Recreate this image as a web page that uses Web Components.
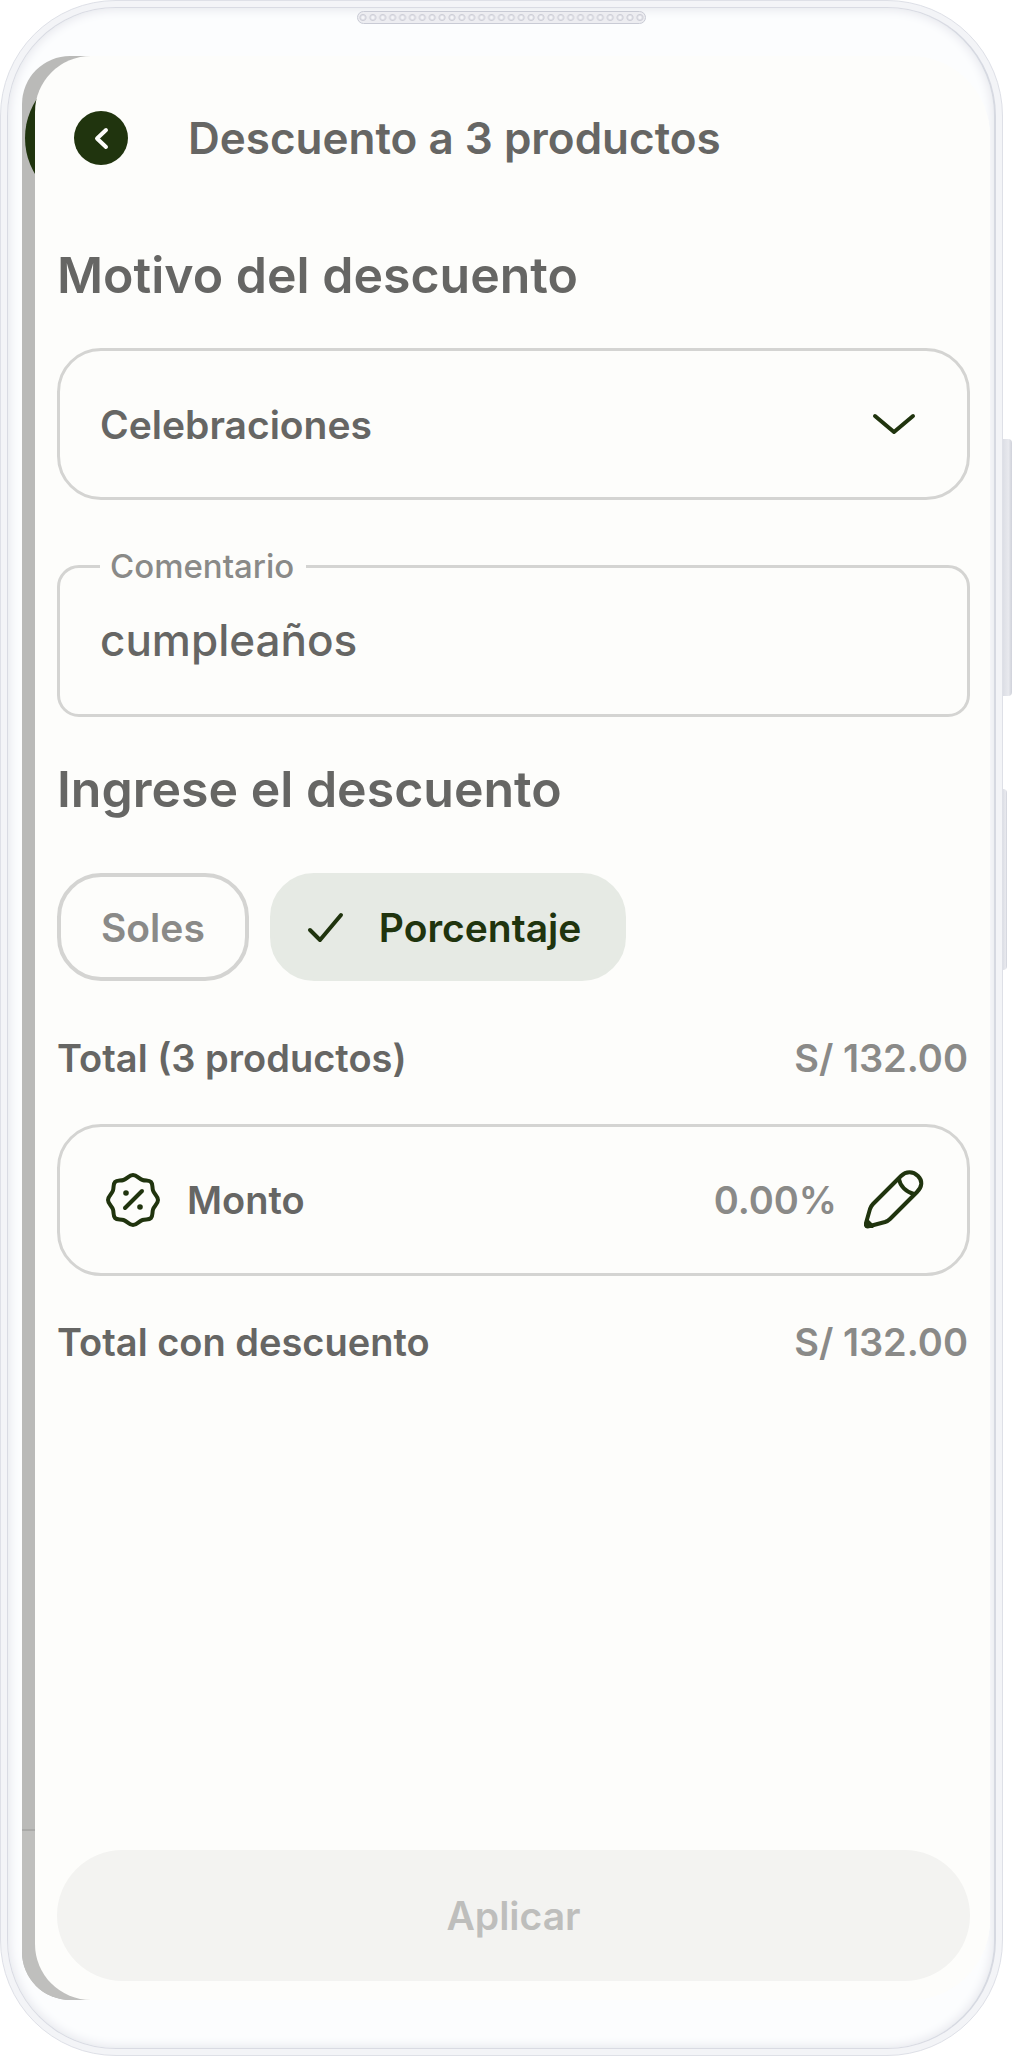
<!DOCTYPE html>
<html lang="es">
<head>
<meta charset="utf-8">
<meta name="viewport" content="width=device-width, initial-scale=1">
<title>Descuento a 3 productos</title>
<style>
  body {
    --green: #20340e;
    --text: #666664;
    --muted: #8a8a88;
    --line: #d4d4d2;
    --surface: #fdfdfb;

    margin: 0;
    background: #fff;
    color: var(--text);
    font-family: Inter, "Liberation Sans", sans-serif;
    font-weight: 600;
  }
</style>
</head>
<body>

<phone-frame>
  <app-header>Descuento a 3 productos</app-header>
  <section-title>Motivo del descuento</section-title>
  <select-field label="Motivo del descuento" value="Celebraciones"></select-field>
  <text-field label="Comentario" value="cumpleaños"></text-field>
  <section-title class="roomy">Ingrese el descuento</section-title>
  <chip-group>
    <choice-chip>Soles</choice-chip>
    <choice-chip selected>Porcentaje</choice-chip>
  </chip-group>
  <total-row>Total (3 productos)<span slot="amount">S/ 132.00</span></total-row>
  <amount-field>Monto<span slot="value">0.00%</span></amount-field>
  <total-row>Total con descuento<span slot="amount">S/ 132.00</span></total-row>
  <submit-button slot="footer">Aplicar</submit-button>
</phone-frame>

<script>
class BaseElement extends HTMLElement {
  constructor() {
    super();
    this.attachShadow({ mode: "open" });
  }

  connectedCallback() {
    this.shadowRoot.innerHTML = /* html */`
    <style>
      *, *::before, *::after { box-sizing: border-box; }
      button, input, select { font: inherit; color: inherit; margin: 0; }
      svg { display: block; fill: none; stroke-linecap: round; stroke-linejoin: round; }
      ${this.constructor.styles}
    </style>
    ${this.render()}`;
  }
}

class PhoneFrame extends BaseElement {
  static get styles() {
    return /* css */`
      :host {
        display: flex;
        position: relative;
        box-sizing: border-box;
        min-height: 100vh;
        padding-right: 9px;
      }

      .case {
        display: flex;
        flex: 1;
        min-width: 0;
        padding: 6px;
        background: #f3f4f7;
        border: 1px solid #dee0e7;
        border-radius: 116px;
      }

      .bezel {
        display: flex;
        flex-direction: column;
        flex: 1;
        min-width: 0;
        padding: 0 4px 0 14px;
        background: #fcfdfe;
        border: 1px solid #d9dbe3;
        border-right: 2px solid #d6d9e1;
        border-radius: 109px;
        box-shadow: inset 0 0 12px #dfe0e8;
      }

      .top {
        display: flex;
        justify-content: center;
        height: 48px;
        padding: 3px 9px 0 0;
      }

      .speaker {
        width: 289px;
        height: 13px;
        border: 1px solid #c9cbd5;
        border-radius: 7px;
        background: radial-gradient(circle, #f6f6f9 1px, #cdced7 3px, #ededf1 4px) 0 0 / 10px 11px round;
      }

      .bottom {
        height: 48px;
      }

      /* SCREEN: the previous view peeks out behind the current one */

      .screen {
        display: grid;
        grid-template-columns: 13px minmax(0, 1fr);
        flex: 1;
        overflow: hidden;
        background: linear-gradient(90deg, #babab8 90px, var(--surface) 90px);
        border-radius: 48px 80px 80px 48px;
      }

      .previous {
        display: flex;
        flex-direction: column;
        justify-content: space-between;
      }

      .blob {
        width: 140px;
        height: 140px;
        margin: 12px 3px;
        border-radius: 50%;
        background: var(--green);
      }

      .bar {
        width: 90px;
        height: 171px;
        border-top: 2px solid #aaaaa8;
        background: #bfbfbd;
      }

      .current {
        display: flex;
        flex-direction: column;
        padding: 0 20px 19px 22px;
        background: var(--surface);
        border-radius: 56px 0 0 56px;
      }

      footer {
        margin-top: auto;
      }

      /* SIDE KEYS */

      .key {
        position: absolute;
        right: 0;
        width: 9px;
        background: linear-gradient(90deg, #dcdee5, #e8e9ee 60%, #cfd1da);
        border-radius: 0 4px 4px 0;
      }

      .volume { top: 439px; height: 257px; }
      .power { top: 789px; right: 5px; width: 4px; height: 181px; }
    `;
  }

  render() {
    return /* html */`
    <div class="case">
      <div class="bezel">
        <div class="top"><div class="speaker"></div></div>
        <div class="screen">
          <div class="previous"><div class="blob"></div><div class="bar"></div></div>
          <main class="current">
            <slot></slot>
            <footer><slot name="footer"></slot></footer>
          </main>
        </div>
        <div class="bottom"></div>
      </div>
    </div>
    <div class="key volume"></div>
    <div class="key power"></div>`;
  }
}

class AppHeader extends BaseElement {
  static get styles() {
    return /* css */`
      :host {
        display: flex;
        align-items: center;
        gap: 60px;
        height: 164px;
        padding-left: 17px;
      }

      button {
        display: grid;
        place-items: center;
        width: 54px;
        height: 54px;
        padding: 0;
        border: 0;
        border-radius: 50%;
        background: var(--green);
      }

      h1 {
        margin: 0;
        font-size: 44px;
        font-weight: 600;
        line-height: 60px;
      }
    `;
  }

  render() {
    return /* html */`
    <button type="button" aria-label="Volver">
      <svg width="54" height="54" viewBox="0 0 54 54" stroke="#fdfdfb" stroke-width="4"><path d="M32 19 23 27.500 32 36"/></svg>
    </button>
    <h1><slot></slot></h1>`;
  }
}

class SectionTitle extends BaseElement {
  static get styles() {
    return /* css */`
      :host {
        display: block;
        margin: 25px 0 43px;
      }

      :host(.roomy) {
        margin: 42px 0 54px;
      }

      h2 {
        margin: 0;
        font-size: 50px;
        font-weight: 600;
        line-height: 60px;
      }
    `;
  }

  render() {
    return /* html */`<h2><slot></slot></h2>`;
  }
}

class SelectField extends BaseElement {
  static get styles() {
    return /* css */`
      :host {
        display: grid;
        align-items: center;
      }

      select, svg {
        grid-area: 1 / 1;
      }

      select {
        appearance: none;
        width: 100%;
        height: 152px;
        padding: 0 100px 0 40px;
        font-size: 39px;
        background: transparent;
        border: 3px solid var(--line);
        border-radius: 44px;
      }

      svg {
        justify-self: end;
        margin-right: 54px;
        pointer-events: none;
      }
    `;
  }

  render() {
    return /* html */`
    <select aria-label="${this.getAttribute("label")}">
      <option>${this.getAttribute("value")}</option>
    </select>
    <svg width="44" height="24" viewBox="0 0 44 24" stroke="var(--green)" stroke-width="4"><path d="M3 4 22 20 41 4"/></svg>`;
  }
}

class TextField extends BaseElement {
  static get styles() {
    return /* css */`
      :host {
        display: block;
        margin-top: 46px;
        font-weight: 500;
      }

      fieldset {
        min-width: 0;
        margin: 0;
        padding: 0 40px 20px;
        border: 3px solid var(--line);
        border-radius: 22px;
      }

      legend {
        padding: 0 12px 0 10px;
        color: var(--muted);
        font-size: 33px;
        line-height: 40px;
      }

      input {
        display: block;
        width: 100%;
        height: 108px;
        padding: 0;
        font-size: 44px;
        background: none;
        border: 0;
      }
    `;
  }

  render() {
    return /* html */`
    <fieldset>
      <legend><label for="field">${this.getAttribute("label")}</label></legend>
      <input id="field" type="text" value="${this.getAttribute("value")}">
    </fieldset>`;
  }
}

class ChipGroup extends BaseElement {
  static get styles() {
    return /* css */`
      :host {
        display: flex;
        gap: 21px;
        margin-bottom: 51px;
      }
    `;
  }

  render() {
    return /* html */`<slot></slot>`;
  }
}

class ChoiceChip extends BaseElement {
  static get styles() {
    return /* css */`
      :host {
        display: block;
      }

      button {
        display: flex;
        align-items: center;
        gap: 34px;
        height: 108px;
        padding: 0 40px;
        color: var(--muted);
        font-size: 39px;
        background: none;
        border: 4px solid var(--line);
        border-radius: 44px;
      }

      :host([selected]) button {
        padding: 0 41px 0 33px;
        color: var(--green);
        background: #e6eae4;
        border-color: #e6eae4;
      }
    `;
  }

  render() {
    const selected = this.hasAttribute("selected");
    const check = selected
      ? `<svg width="38" height="32" viewBox="0 0 38 32" stroke="var(--green)" stroke-width="4"><path d="M3 19 13 29 34 4"/></svg>`
      : "";

    return /* html */`<button type="button" aria-pressed="${selected}">${check}<span><slot></slot></span></button>`;
  }
}

class TotalRow extends BaseElement {
  static get styles() {
    return /* css */`
      :host {
        display: flex;
        justify-content: space-between;
        padding-right: 2px;
        font-size: 38px;
        line-height: 52px;
      }

      .amount {
        color: var(--muted);
      }
    `;
  }

  render() {
    return /* html */`
    <span><slot></slot></span>
    <span class="amount"><slot name="amount"></slot></span>`;
  }
}

class AmountField extends BaseElement {
  static get styles() {
    return /* css */`
      :host {
        display: flex;
        align-items: center;
        gap: 27px;
        box-sizing: border-box;
        height: 152px;
        margin: 40px 0;
        padding: 0 43px 0 46px;
        font-size: 38px;
        border: 3px solid var(--line);
        border-radius: 44px;
      }

      .value {
        margin-left: auto;
        color: var(--muted);
      }

      button {
        padding: 0;
        background: none;
        border: 0;
      }
    `;
  }

  render() {
    return /* html */`
    <svg width="54" height="54" viewBox="0 0 54 54" stroke="var(--green)" stroke-width="4">
      <path d="M27 2C31 2 33 6 36.500 7C40 8 43 7 45 9C47 11 46 14 47 17.500C48 21 52 23 52 27C52 31 48 33 47 36.500C46 40 47 43 45 45C43 47 40 46 36.500 47C33 48 31 52 27 52C23 52 21 48 17.500 47C14 46 11 47 9 45C7 43 8 40 7 36.500C6 33 2 31 2 27C2 23 6 21 7 17.500C8 14 7 11 9 9C11 7 14 8 17.500 7C21 6 23 2 27 2Z"/>
      <path d="M19 35 36 18"/>
      <circle cx="20" cy="20" r="2.800" fill="var(--green)" stroke="none"/>
      <circle cx="34" cy="34" r="2.800" fill="var(--green)" stroke="none"/>
    </svg>
    <span><slot></slot></span>
    <span class="value"><slot name="value"></slot></span>
    <button type="button" aria-label="Editar monto">
      <svg width="60" height="60" viewBox="0 0 60 60" stroke="var(--green)" stroke-width="4">
        <path d="M9 34 37 6C42 1 49 1 54 6C59 11 58 17 53 22L26 49Q24 51 21 52L6 56Q1 58 2 53L6 39Q7 36 9 34Z"/>
        <path d="M35 9C36 16 42 22 50 24"/>
        <path d="M3 51 8 56 3 56Z" fill="var(--green)"/>
      </svg>
    </button>`;
  }
}

class SubmitButton extends BaseElement {
  static get styles() {
    return /* css */`
      :host {
        display: block;
      }

      button {
        width: 100%;
        height: 131px;
        color: #bebebc;
        font-size: 39px;
        background: #f3f3f1;
        border: 0;
        border-radius: 66px;
      }
    `;
  }

  render() {
    return /* html */`<button type="button" disabled><slot></slot></button>`;
  }
}

customElements.define("phone-frame", PhoneFrame);
customElements.define("app-header", AppHeader);
customElements.define("section-title", SectionTitle);
customElements.define("select-field", SelectField);
customElements.define("text-field", TextField);
customElements.define("chip-group", ChipGroup);
customElements.define("choice-chip", ChoiceChip);
customElements.define("total-row", TotalRow);
customElements.define("amount-field", AmountField);
customElements.define("submit-button", SubmitButton);
</script>
</body>
</html>
